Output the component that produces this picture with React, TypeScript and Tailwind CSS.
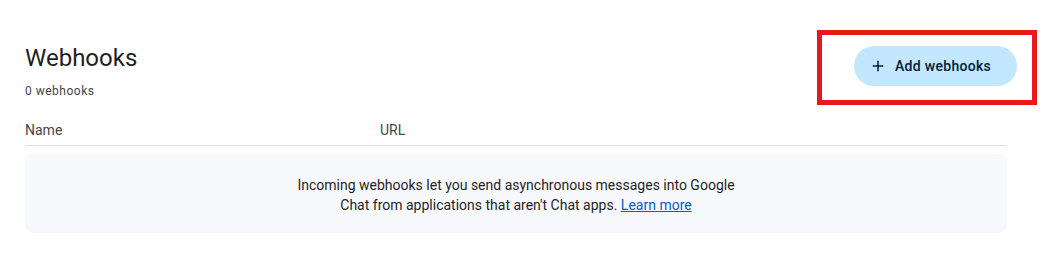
import React from "react";

function PlusIcon() {
  return (
    <svg width="18" height="18" viewBox="0 0 24 24" fill="none" stroke="currentColor" strokeWidth="2">
      <path d="M12 5v14M5 12h14" />
    </svg>
  );
}

export default function App() {
  return (
    <div className="relative w-[1060px] h-[278px] bg-white font-['Roboto',sans-serif] text-[#1f1f1f]">
      <div className="pl-[25px] pt-[44px] w-[1007px]">
        {/* header */}
        <div className="flex justify-between items-start">
          <div>
            <h1 className="text-[24px] leading-[28px] font-normal text-[#1f1f1f]">Webhooks</h1>
            <p className="mt-[11px] text-[12px] leading-[16px] tracking-[0.5px] text-[#444746]">0 webhooks</p>
          </div>
          <button className="mt-[2px] mr-[-10px] h-[40px] w-[163px] rounded-full bg-[#c2e7ff] flex items-center pl-[15px] gap-[8px] text-[14px] font-medium tracking-[0.3px] text-[#001d35]">
            <PlusIcon />
            Add webhooks
          </button>
        </div>

        {/* table head */}
        <div className="mt-[16px] flex h-[31px] items-center text-[14px] text-[#444746] border-b border-[#e0e0e0]">
          <div className="w-[355px]">Name</div>
          <div>URL</div>
        </div>

        {/* empty state */}
        <div className="mt-[8px] h-[79px] pt-[2px] rounded-[8px] bg-[#f8f9fd] flex items-center justify-center">
          <p className="max-w-[460px] text-center text-[14px] leading-[20px] text-[#1f1f1f]">
            Incoming webhooks let you send asynchronous messages into Google Chat from applications that aren't Chat apps.{" "}
            <a href="#" className="text-[#0b57d0] underline">Learn more</a>
          </p>
        </div>
      </div>

      {/* highlight annotation */}
      <div className="absolute left-[817px] top-[30px] w-[220px] h-[75px] border-[5px] border-[#e8191c] pointer-events-none" />
    </div>
  );
}
